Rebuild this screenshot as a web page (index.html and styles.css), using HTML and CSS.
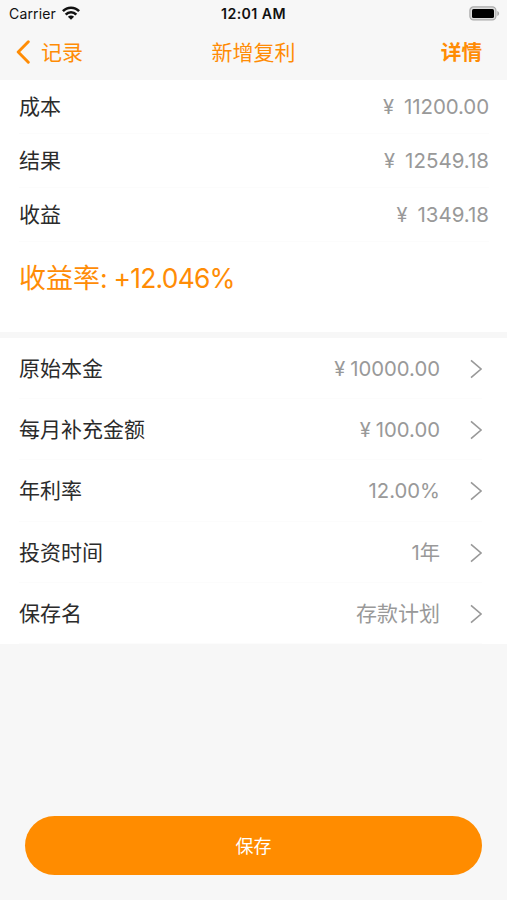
FILE: index.html
```html
<!DOCTYPE html>
<html lang="zh-CN">
<head>
<meta charset="utf-8">
<title>新增复利</title>
<link rel="stylesheet" href="styles.css">
</head>
<body>
<header class="top">
  <div class="status">
    <div class="carrier"><span>Carrier</span>
      <svg class="wifi" viewBox="0 0 18 14" width="18" height="14"><g fill="none" stroke="#111" stroke-width="2.6"><path d="M.9 5.2C5.3.5 12.7.5 17.1 5.2"/><path d="M3.7 8.6c2.9-3.1 7.7-3.1 10.6 0"/></g><path d="M9 13.8 5.9 10.8c1.8-1.7 4.4-1.7 6.2 0z" fill="#111"/></svg>
    </div>
    <div class="clock">12:01 AM</div>
    <svg class="battery" viewBox="0 0 31 15" width="31" height="15"><rect x=".9" y=".9" width="26" height="13" rx="3.6" fill="#ddd" stroke="#aaa" stroke-width="1.2"/><rect x="3" y="3" width="22" height="9" rx="1.6" fill="#000"/><path d="M28.3 5c2.4.8 2.4 4.2 0 5z" fill="#aaa"/></svg>
  </div>
  <nav class="nav">
    <a class="back"><svg viewBox="0 0 14 24" width="14" height="24"><path d="M12.3 1.8 2.2 12l10.1 10.2" fill="none" stroke="#ff8c05" stroke-width="2.9" stroke-linecap="round" stroke-linejoin="round"/></svg><span>记录</span></a>
    <h1 class="title">新增复利</h1>
    <a class="detail">详情</a>
  </nav>
</header>
<main>
  <section class="summary">
    <div class="row"><span>成本</span><span class="value tight"><i class="yen">¥</i>11200.00</span></div>
    <div class="row"><span>结果</span><span class="value"><i class="yen">¥</i>12549.18</span></div>
    <div class="row"><span>收益</span><span class="value"><i class="yen">¥</i>1349.18</span></div>
    <p class="rate">收益率<span class="percent">: +12.046%</span></p>
  </section>
  <section class="form">
    <div class="row"><span>原始本金</span><span class="value"><i class="yen">¥</i>10000.00</span><svg class="chevron" viewBox="0 0 12 20"><path d="m1 1.3 10 8.7L1 18.7"/></svg></div>
    <div class="row"><span>每月补充金额</span><span class="value"><i class="yen">¥</i>100.00</span><svg class="chevron" viewBox="0 0 12 20"><path d="m1 1.3 10 8.7L1 18.7"/></svg></div>
    <div class="row"><span>年利率</span><span class="value">12.00%</span><svg class="chevron" viewBox="0 0 12 20"><path d="m1 1.3 10 8.7L1 18.7"/></svg></div>
    <div class="row"><span>投资时间</span><span class="value">1年</span><svg class="chevron" viewBox="0 0 12 20"><path d="m1 1.3 10 8.7L1 18.7"/></svg></div>
    <div class="row"><span>保存名</span><span class="value name">存款计划</span><svg class="chevron" viewBox="0 0 12 20"><path d="m1 1.3 10 8.7L1 18.7"/></svg></div>
  </section>
</main>
<footer class="footer"><button class="save">保存</button></footer>
</body>
</html>
```
FILE: styles.css
```css
* { box-sizing: border-box; }
body {
  margin: 0;
  height: 900px;
  display: flex;
  flex-direction: column;
  background: #f7f7f7;
  color: #2b2b2b;
  font: 21px/30px Inter, "Noto Sans CJK SC", sans-serif;
}
.top { height: 80px; }
.status {
  height: 27px;
  display: grid;
  grid-template-columns: 1fr auto 1fr;
  align-items: center;
  padding: 0 7px;
  font-size: 14px;
  line-height: 26px;
  color: #111;
}
.carrier { display: flex; align-items: center; gap: 6px; padding-left: 2px; letter-spacing: .15px; }
.wifi { margin-top: -2px; }
.clock { font-weight: 600; font-size: 14.2px; letter-spacing: .4px; }
.battery { justify-self: end; }
.nav {
  height: 50px;
  display: grid;
  grid-template-columns: 1fr auto 1fr;
  align-items: center;
  padding: 0 25px 0 17px;
  color: #ff8c05;
}
.back { display: flex; align-items: center; gap: 11px; margin-left: -1px; }
.back span, .title, .detail { padding-top: 2px; }
.title { margin: 0 -4px 0 4px; font-size: 21px; font-weight: 400; }
.detail { justify-self: end; font-weight: 700; font-size: 20.6px; }
.row { display: flex; align-items: center; }
.value { margin-left: auto; color: #999; font-size: 20.5px; }
.tight { letter-spacing: -.1px; }
.yen { font-style: normal; font-size: 20px; margin-right: 10px; }
.summary {
  height: 252px;
  padding: 0 18px 0 19px;
  background: #fff;
}
.summary .row { height: 54px; padding-top: 1px; border-bottom: 1px solid #fcfcfc; }
.rate {
  margin: 16px 0 0;
  font-size: 27px;
  line-height: 40px;
  color: #ff8c05;
}
.percent { font-size: 26.4px; letter-spacing: -.75px; }
.form {
  margin-top: 6px;
  padding: 0 25px 0 19px;
  background: #fff;
}
.form .row { height: 61.2px; padding-top: 2px; border-bottom: 1px solid #fcfcfc; }
.form .value { font-size: 20.3px; }
.form .name { font-size: 21px; }
.form .yen { margin-right: 5px; }
.chevron {
  width: 12px;
  height: 20px;
  margin-left: 30px;
  fill: none;
  stroke: #999;
  stroke-width: 1.6;
}
.footer { margin-top: auto; padding: 0 25px 25px; }
.save {
  display: block;
  width: 100%;
  height: 59px;
  padding: 2px 0 0;
  border: 0;
  border-radius: 30px;
  background: #ff8c00;
  color: #fff;
  font: 18px/27px Inter, "Noto Sans CJK SC", sans-serif;
}
```
